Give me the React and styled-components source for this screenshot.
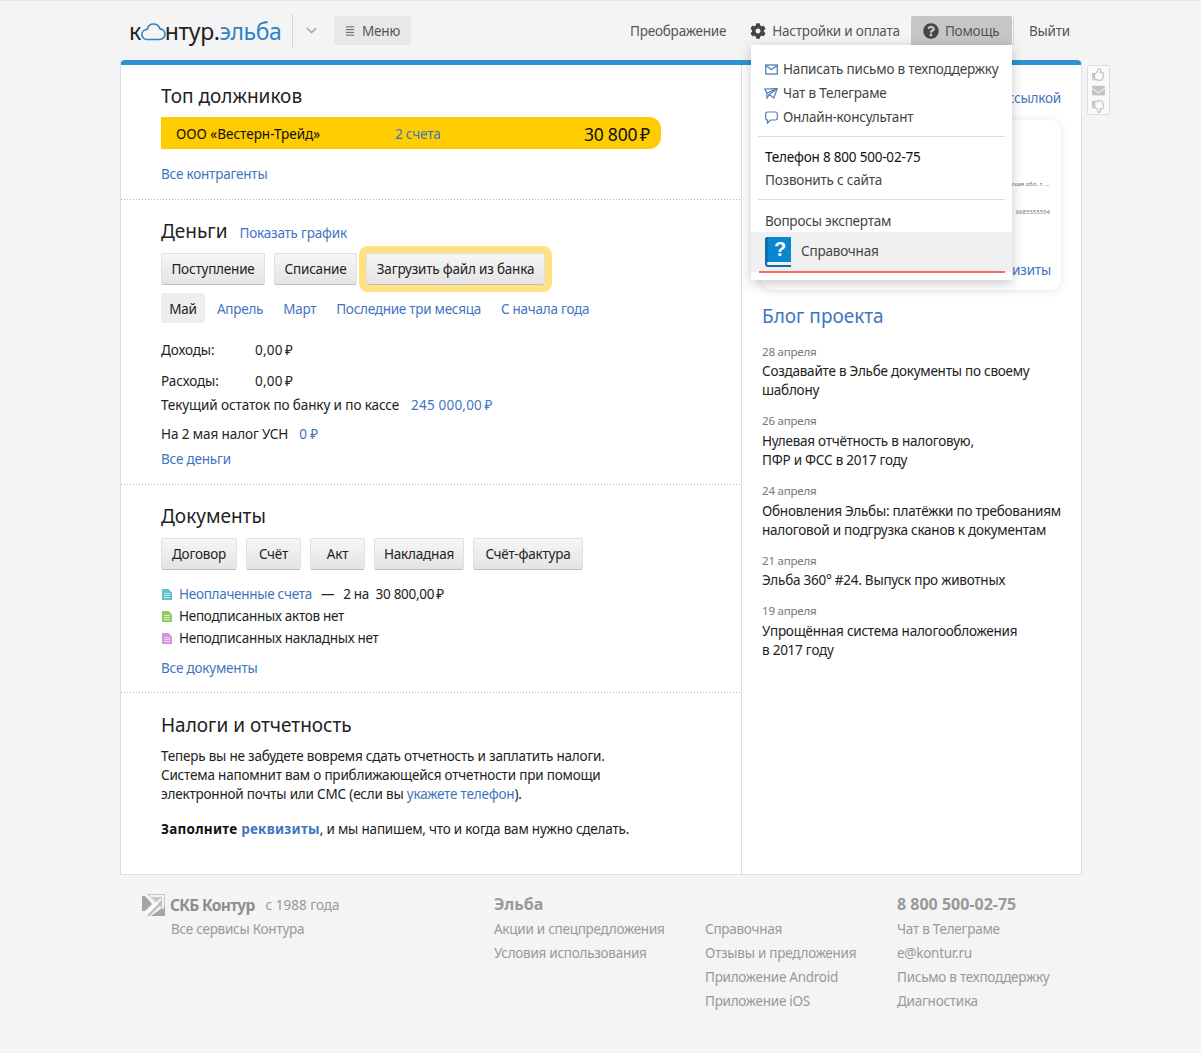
import React from 'react';
import styled, { createGlobalStyle } from 'styled-components';
import { FaCog, FaQuestionCircle, FaRegThumbsUp, FaRegThumbsDown, FaEnvelope } from 'react-icons/fa';
import { FiChevronDown } from 'react-icons/fi';

const GlobalStyle = createGlobalStyle`
  html, body {
    margin: 0;
    padding: 0;
    background: #f4f4f4;
    font-family: "Noto Sans", "Open Sans", "Liberation Sans", sans-serif;
    font-size: 13.5px;
    letter-spacing: -0.2px;
    color: #222;
  }
  body { box-shadow: inset 0 1px 0 #eedfec; }
  * { box-sizing: border-box; }
`;

const RUB = '\u2009₽';

const Page = styled.div`
  width: 962px;
  height: 1053px;
  margin-left: 120px;
  position: relative;
`;

const Header = styled.header`
  height: 60px;
  display: flex;
  align-items: center;
  justify-content: space-between;
  padding-top: 1px;
`;

const Brand = styled.div`
  display: flex;
  align-items: center;
`;

const Logo = styled.div`
  display: flex;
  align-items: center;
  padding-left: 9px;
  width: 173px;
  height: 34px;
  font-size: 23px;
  letter-spacing: -0.4px;
  line-height: 34px;
  color: #222;
  border-right: 1px solid #d4d4d4;
  span { color: #2c84c8; }
  svg { margin: 3px -1px 0 0; }
`;

const Chevron = styled(FiChevronDown)`
  margin-left: 10px;
  color: #aaa;
  font-size: 17px;
`;

const MenuButton = styled.div`
  display: flex;
  align-items: center;
  gap: 7px;
  margin-left: 14px;
  width: 77px;
  height: 29px;
  padding: 0 11px;
  background: #e8e8e8;
  border-radius: 2px;
  color: #555;
`;

const Nav = styled.nav`
  display: flex;
  align-items: center;
  height: 29px;
  color: #555;
`;

const NavItem = styled.div`
  display: flex;
  align-items: center;
  gap: 6px;
  height: 29px;
  margin-left: ${(p) => p.$gap || 0}px;
  padding: ${(p) => (p.$active ? '0 12px' : '0')};
  width: ${(p) => p.$width || 'auto'};
  background: ${(p) => (p.$active ? '#c6c6c6' : 'transparent')};
  border-radius: 2px 2px 0 0;
  svg { color: #444; font-size: 16px; }
`;

const NavDivider = styled.div`
  width: 1px;
  height: 29px;
  margin: 0 15px 0 1px;
  background: #d8d8d8;
`;

const Dropdown = styled.div`
  position: absolute;
  left: 631px;
  top: 45px;
  width: 261px;
  height: 235px;
  padding-top: 12px;
  background: #fff;
  box-shadow: 0 3px 12px rgba(0, 0, 0, 0.22);
  z-index: 3;
  color: #444;
`;

const DropItem = styled.div`
  display: flex;
  align-items: center;
  height: 24px;
  padding-left: 14px;
  gap: 5px;
  svg { flex: none; }
`;

const DropDivider = styled.div`
  height: 1px;
  margin: ${(p) => p.$margin};
  background: #ddd;
`;

const DropText = styled.div`
  height: 23px;
  line-height: 23px;
  padding-left: 14px;
  color: ${(p) => (p.$dark ? '#111' : '#444')};
`;

const HelpRow = styled.div`
  display: flex;
  align-items: center;
  height: 40px;
  margin-top: -1px;
  padding-left: 14px;
  gap: 10px;
  background: #f0f0f0;
  position: relative;
  &::after {
    content: '';
    position: absolute;
    left: 8px;
    right: 7px;
    bottom: -1px;
    height: 2px;
    background: #f56a6a;
  }
`;

const HelpLabel = styled.span`
  margin-bottom: 2px;
`;

const Card = styled.main`
  display: flex;
  height: 815px;
  background: #fff;
  border: 1px solid #dedede;
  border-top: 5px solid #2e92d0;
  border-radius: 5px 5px 0 0;
  position: relative;
`;

const LeftColumn = styled.div`
  width: 621px;
  flex: none;
  border-right: 1px solid #dedede;
`;

const RightColumn = styled.div`
  flex: 1;
  min-width: 0;
  padding: 0 20px;
`;

const Section = styled.section`
  height: ${(p) => p.$height}px;
  padding: ${(p) => p.$top}px 40px 0;
  background-image: ${(p) => (p.$last ? 'none' : 'linear-gradient(to right, #b4b4b4 1px, transparent 1px)')};
  background-size: 3px 1px;
  background-repeat: repeat-x;
  background-position: left bottom;
`;

const Title = styled.h2`
  margin: 0;
  font-weight: 400;
  font-size: 19px;
  letter-spacing: 0;
  line-height: 26px;
  color: #222;
`;

const TitleRow = styled.div`
  display: flex;
  align-items: baseline;
  gap: 12px;
`;

const Link = styled.a`
  color: #3f75bf;
  font-weight: ${(p) => (p.$bold ? 700 : 400)};
`;

const Amount = styled.span`
  letter-spacing: 0.2px;
`;

const LinkLine = styled.div`
  line-height: 20px;
  margin-top: ${(p) => p.$top}px;
`;

const DebtBar = styled.div`
  display: flex;
  align-items: center;
  width: 500px;
  height: 32px;
  margin-top: 8px;
  padding: 1px 11px 0 15px;
  background: #ffcc00;
  border-radius: 0 12px 12px 0;
  color: #111;
`;

const DebtName = styled.span`
  width: 219px;
  letter-spacing: 0;
`;

const DebtSum = styled.span`
  margin-left: auto;
  font-size: 17.5px;
`;

const Buttons = styled.div`
  display: flex;
  gap: 9px;
  margin-top: ${(p) => p.$top}px;
`;

const Button = styled.div`
  display: flex;
  align-items: center;
  justify-content: center;
  height: 32px;
  width: ${(p) => p.$width}px;
  background: linear-gradient(#f6f6f6, #e4e4e4);
  border: 1px solid #e0e0e0;
  border-bottom-color: #bdbdbd;
  border-radius: 2px;
  color: #222;
  ${(p) => p.$highlight && `
    box-shadow: 0 0 0 7px #ffe082;
    border-radius: 3px;
  `}
`;

const Periods = styled.div`
  display: flex;
  align-items: center;
  gap: 20px;
  margin-top: 8px;
  height: 30px;
  letter-spacing: -0.26px;
  a { padding-top: 2px; }
`;

const ActivePeriod = styled.span`
  display: flex;
  align-items: center;
  justify-content: center;
  width: 44px;
  height: 30px;
  padding-top: 2px;
  margin-right: -8px;
  background: #eee;
  border-radius: 2px;
`;

const Stat = styled.div`
  display: flex;
  align-items: center;
  height: 20px;
  margin-top: ${(p) => p.$top}px;
  letter-spacing: -0.1px;
  white-space: pre;
`;

const StatLabel = styled.span`
  width: 94px;
`;

const StatLink = styled(Link)`
  margin-left: ${(p) => p.$gap}px;
`;

const DocRow = styled.div`
  display: flex;
  align-items: center;
  height: 22px;
  white-space: pre;
  letter-spacing: -0.28px;
  margin-top: ${(p) => p.$top || 0}px;
  svg { margin: 0 7px 0 1px; }
`;

const DocDash = styled.span`
  margin: 0 9px;
`;

const Paragraph = styled.p`
  margin: ${(p) => p.$top}px 0 0;
  line-height: 19px;
  color: #222;
  b { color: #111; letter-spacing: 0.25px; }
`;

const ShareLine = styled.div`
  height: 20px;
  margin-top: 23px;
  line-height: 20px;
  text-align: right;
`;

const Requisites = styled.div`
  position: relative;
  height: 170px;
  margin-top: 12px;
  border-radius: 10px;
  background: #fff;
  box-shadow: 0 1px 8px rgba(0, 0, 0, 0.1);
`;

const TinyText = styled.div`
  position: absolute;
  right: 11px;
  top: ${(p) => p.$top}px;
  font-size: 6px;
  letter-spacing: 0;
  color: #777;
`;

const RequisitesLink = styled(Link)`
  position: absolute;
  right: 10px;
  bottom: 11px;
`;

const BlogTitle = styled.h2`
  margin: 12px 0 0;
  font-weight: 400;
  font-size: 19px;
  letter-spacing: 0;
  line-height: 28px;
  color: #3f75bf;
`;

const Post = styled.article`
  margin-top: ${(p) => (p.$first ? 12 : 11)}px;
`;

const PostDate = styled.div`
  font-size: 11.5px;
  line-height: 20px;
  color: #777;
`;

const PostTitle = styled.div`
  margin-top: ${(p) => p.$top || 0}px;
  line-height: 19px;
  letter-spacing: -0.24px;
  white-space: nowrap;
  color: #222;
`;

const Feedback = styled.div`
  position: absolute;
  left: 966px;
  top: 0;
  display: flex;
  flex-direction: column;
  align-items: center;
  justify-content: center;
  gap: 3px;
  width: 23px;
  height: 50px;
  background: #fafafa;
  border: 1px solid #ddd;
  border-radius: 2px;
  color: #c4c4c4;
  font-size: 13px;
`;

const Footer = styled.footer`
  display: grid;
  grid-template-columns: 374px 211px 192px 1fr;
  padding-top: 17px;
  letter-spacing: -0.26px;
  color: #999;
`;

const FooterCol = styled.div``;

const FooterBrand = styled.div`
  display: flex;
  align-items: center;
  height: 25px;
  margin-left: 22px;
  letter-spacing: 0;
  svg { flex: none; margin-right: 5px; }
`;

const BrandName = styled.b`
  font-size: 15.5px;
  letter-spacing: -0.7px;
  color: #8e8e8e;
  margin-right: 11px;
`;

const FooterTitle = styled.div`
  font-weight: 700;
  font-size: 16px;
  letter-spacing: 0;
  line-height: 25px;
  color: #999;
`;

const FooterLine = styled.div`
  line-height: 24px;
  margin-left: ${(p) => p.$indent || 0}px;
`;

const Spacer = styled.div`
  height: 25px;
`;

const PlaneSvg = styled.svg`
  margin-left: -1px;
`;

function BurgerIcon() {
  return (
    <svg width="11" height="10" viewBox="0 0 11 10" fill="none" stroke="#555">
      <path d="M1 .5h9M1 3.5h9M1 6.5h9M1 9.5h9" />
    </svg>
  );
}

function CloudIcon() {
  return (
    <svg width="25" height="18" viewBox="0 0 25 18" fill="none" stroke="#2c84c8" strokeWidth="1.6">
      <path d="M6 16.500h12.500c3 0 5.500-2.400 5.500-5.300 0-2.800-2.100-5-4.900-5.300C17.900 2.900 15.400 1 12.600 1 9.400 1 6.900 3.300 6.300 6.300 3.300 6.600.9 8.800.9 11.500c0 2.800 2.300 5 5.100 5z" />
    </svg>
  );
}

function MailIcon() {
  return (
    <svg width="13" height="11" viewBox="0 0 13 11" fill="none" stroke="#4f7fb4" strokeWidth="1.3">
      <rect x=".7" y="1" width="11.6" height="9" />
      <path d="M.7 1.500l5.800 4 5.800-4" />
    </svg>
  );
}

function PlaneIcon() {
  return (
    <PlaneSvg width="14" height="11" viewBox="0 0 14 11" fill="none" stroke="#4f7fb4" strokeWidth="1.200">
      <path d="M.8 1l12.400-.4-3.400 9.400-4.600-3.600L3 10l-.2-5L.8 1z" />
      <path d="M13 .8L3 5M13 .8L5.200 6.400" />
    </PlaneSvg>
  );
}

function ChatIcon() {
  return (
    <svg width="13" height="13" viewBox="0 0 13 13" fill="none" stroke="#4f7fb4" strokeWidth="1.200">
      <path d="M2.500 1h8c1 0 1.800.7 1.800 1.700v4.600c0 1-.8 1.700-1.800 1.700H5.500L2.500 12V9c-1 0-1.800-.7-1.800-1.700V2.700C.7 1.700 1.500 1 2.500 1z" />
    </svg>
  );
}

function BookIcon() {
  return (
    <svg width="26" height="30" viewBox="0 0 26 30">
      <path d="M2 0h24v25H3.500C2.500 25 2 25.700 2 26.500S2.500 28 3.500 28H26v2H3c-1.700 0-3-1.300-3-3V2C0 .9.900 0 2 0z" fill="#0f6fae" />
      <rect x="3" y="0" width="23" height="25" fill="#0a86d0" />
      <text x="15" y="18.500" textAnchor="middle" fontSize="20" fontWeight="700" fontFamily="Liberation Sans, sans-serif" fill="#fff">?</text>
    </svg>
  );
}

function DocIcon({ color }) {
  return (
    <svg width="10" height="11" viewBox="0 0 10 11">
      <path d="M0 0h6.500L10 3.500V11H0z" fill={color} />
      <path d="M2 4.500h6M2 6.500h6M2 8.500h6" stroke="#fff" strokeOpacity=".65" />
    </svg>
  );
}

function KonturMark() {
  return (
    <svg width="23" height="22" viewBox="0 0 23 22">
      <path d="M0 2h3l7 8-7 7H0z" fill="#a4a4a4" />
      <path d="M5 0h18v18L15 9 8 3z" fill="#a4a4a4" opacity=".55" />
      <path d="M6 22l14-14" stroke="#bbb" strokeWidth="2" />
      <path d="M23 12v10H9z" fill="#a4a4a4" />
      <path d="M8 2h13v13" fill="none" stroke="#fff" strokeWidth="1.500" />
      <path d="M3 21L19 5" stroke="#fff" strokeWidth="1.500" />
    </svg>
  );
}

export default function App() {
  return (
    <>
      <GlobalStyle />
      <Page>
        <Header>
          <Brand>
            <Logo>
              к
              <CloudIcon />
              нтур.<span>эльба</span>
            </Logo>
            <Chevron />
            <MenuButton>
              <BurgerIcon />
              Меню
            </MenuButton>
          </Brand>
          <Nav>
            <NavItem>Преображение</NavItem>
            <NavItem $gap={24}>
              <FaCog />
              Настройки и оплата
            </NavItem>
            <NavItem $gap={11} $active $width="101px">
              <FaQuestionCircle />
              Помощь
            </NavItem>
            <NavDivider />
            <NavItem>Выйти</NavItem>
            <NavItem $width="12px" />
          </Nav>
        </Header>

        <Dropdown>
          <DropItem><MailIcon />Написать письмо в техподдержку</DropItem>
          <DropItem><PlaneIcon />Чат в Телеграме</DropItem>
          <DropItem><ChatIcon />Онлайн-консультант</DropItem>
          <DropDivider $margin="7px 7px 9px" />
          <DropText $dark>Телефон 8 800 500-02-75</DropText>
          <DropText>Позвонить с сайта</DropText>
          <DropDivider $margin="7px 7px 10px" />
          <DropText>Вопросы экспертам</DropText>
          <HelpRow><BookIcon /><HelpLabel>Справочная</HelpLabel></HelpRow>
        </Dropdown>

        <Card>
          <Feedback>
            <FaRegThumbsUp />
            <FaEnvelope />
            <FaRegThumbsDown />
          </Feedback>
          <LeftColumn>
            <Section $height={135} $top={18}>
              <Title>Топ должников</Title>
              <DebtBar>
                <DebtName>ООО «Вестерн-Трейд»</DebtName>
                <Link>2 счета</Link>
                <DebtSum>30 800{RUB}</DebtSum>
              </DebtBar>
              <LinkLine $top={15}><Link>Все контрагенты</Link></LinkLine>
            </Section>

            <Section $height={285} $top={18}>
              <TitleRow>
                <Title>Деньги</Title>
                <Link>Показать график</Link>
              </TitleRow>
              <Buttons $top={9}>
                <Button $width={104}>Поступление</Button>
                <Button $width={83}>Списание</Button>
                <Button $width={179} $highlight>Загрузить файл из банка</Button>
              </Buttons>
              <Periods>
                <ActivePeriod>Май</ActivePeriod>
                <Link>Апрель</Link>
                <Link>Март</Link>
                <Link>Последние три месяца</Link>
                <Link>С начала года</Link>
              </Periods>
              <Stat $top={17}><StatLabel>Доходы:</StatLabel><Amount>0,00{RUB}</Amount></Stat>
              <Stat $top={11}><StatLabel>Расходы:</StatLabel><Amount>0,00{RUB}</Amount></Stat>
              <Stat $top={4}>
                Текущий остаток по банку и по кассе
                <StatLink $gap={12}><Amount>245 000,00{RUB}</Amount></StatLink>
              </Stat>
              <Stat $top={9}>
                На 2 мая налог УСН
                <StatLink $gap={11}>0 ₽</StatLink>
              </Stat>
              <LinkLine $top={5}><Link>Все деньги</Link></LinkLine>
            </Section>

            <Section $height={208} $top={18}>
              <Title>Документы</Title>
              <Buttons $top={9}>
                <Button $width={76}>Договор</Button>
                <Button $width={55}>Счёт</Button>
                <Button $width={55}>Акт</Button>
                <Button $width={90}>Накладная</Button>
                <Button $width={110}>Счёт-фактура</Button>
              </Buttons>
              <DocRow $top={13}>
                <DocIcon color="#5cc4c8" />
                <Link>Неоплаченные счета</Link>
                <DocDash>—</DocDash>
                2 на  30 800,00{RUB}
              </DocRow>
              <DocRow><DocIcon color="#8ccf5c" />Неподписанных актов нет</DocRow>
              <DocRow><DocIcon color="#d095dc" />Неподписанных накладных нет</DocRow>
              <LinkLine $top={9}><Link>Все документы</Link></LinkLine>
            </Section>

            <Section $height={182} $top={19} $last>
              <Title>Налоги и отчетность</Title>
              <Paragraph $top={9}>
                Теперь вы не забудете вовремя сдать отчетность и заплатить налоги.<br />
                Система напомнит вам о приближающейся отчетности при помощи<br />
                электронной почты или СМС (если вы <Link>укажете телефон</Link>).
              </Paragraph>
              <Paragraph $top={16}>
                <b>Заполните <Link $bold>реквизиты</Link></b>, и мы напишем, что и когда вам нужно сделать.
              </Paragraph>
            </Section>
          </LeftColumn>

          <RightColumn>
            <ShareLine><Link>Поделиться ссылкой</Link></ShareLine>
            <Requisites>
              <TinyText $top={60}>Свердловская обл, г. ...</TinyText>
              <TinyText $top={88}>6685555554</TinyText>
              <RequisitesLink>Реквизиты</RequisitesLink>
            </Requisites>
            <BlogTitle>Блог проекта</BlogTitle>
            <Post $first>
              <PostDate>28 апреля</PostDate>
              <PostTitle>Создавайте в Эльбе документы по своему<br />шаблону</PostTitle>
            </Post>
            <Post>
              <PostDate>26 апреля</PostDate>
              <PostTitle $top={1}>Нулевая отчётность в налоговую,<br />ПФР и ФСС в 2017 году</PostTitle>
            </Post>
            <Post>
              <PostDate>24 апреля</PostDate>
              <PostTitle $top={1}>Обновления Эльбы: платёжки по требованиям<br />налоговой и подгрузка сканов к документам</PostTitle>
            </Post>
            <Post>
              <PostDate>21 апреля</PostDate>
              <PostTitle>Эльба 360° #24. Выпуск про животных</PostTitle>
            </Post>
            <Post>
              <PostDate>19 апреля</PostDate>
              <PostTitle $top={1}>Упрощённая система налогообложения<br />в 2017 году</PostTitle>
            </Post>
          </RightColumn>
        </Card>

        <Footer>
          <FooterCol>
            <FooterBrand>
              <KonturMark />
              <BrandName>СКБ Контур</BrandName>
              с 1988 года
            </FooterBrand>
            <FooterLine $indent={51}>Все сервисы Контура</FooterLine>
          </FooterCol>
          <FooterCol>
            <FooterTitle>Эльба</FooterTitle>
            <FooterLine>Акции и спецпредложения</FooterLine>
            <FooterLine>Условия использования</FooterLine>
          </FooterCol>
          <FooterCol>
            <Spacer />
            <FooterLine>Справочная</FooterLine>
            <FooterLine>Отзывы и предложения</FooterLine>
            <FooterLine>Приложение Android</FooterLine>
            <FooterLine>Приложение iOS</FooterLine>
          </FooterCol>
          <FooterCol>
            <FooterTitle>8 800 500-02-75</FooterTitle>
            <FooterLine>Чат в Телеграме</FooterLine>
            <FooterLine>e@kontur.ru</FooterLine>
            <FooterLine>Письмо в техподдержку</FooterLine>
            <FooterLine>Диагностика</FooterLine>
          </FooterCol>
        </Footer>
      </Page>
    </>
  );
}
